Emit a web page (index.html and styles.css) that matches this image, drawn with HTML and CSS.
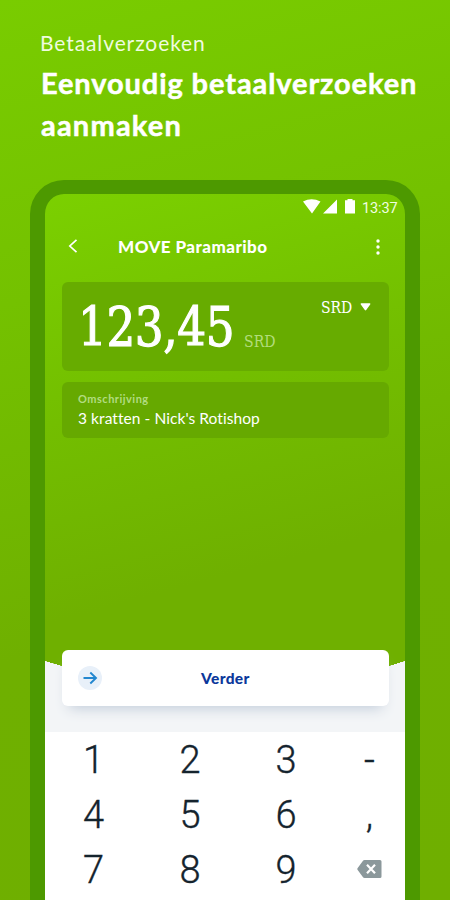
FILE: index.html
```html
<!DOCTYPE html>
<html lang="nl">
<head>
<meta charset="utf-8">
<title>Betaalverzoeken</title>
<link rel="stylesheet" href="styles.css">
</head>
<body>
<main class="promo">
  <header class="intro">
    <p class="eyebrow">Betaalverzoeken</p>
    <h1 class="headline">Eenvoudig betaalverzoeken<br><span class="line-two">aanmaken</span></h1>
  </header>
  <section class="phone">
    <div class="status">
      <svg width="54" height="15" viewBox="0 0 54 15" fill="#fff"><path d="M0 2.500Q8.500-2 17.500 2.500L9 14.500ZM34 .5V14.500H20ZM42 1.200h2.500V0h5v1.200H52V14.500H42Z"/></svg>
      <span class="time">13:37</span>
    </div>
    <nav class="appbar">
      <svg class="back" width="10" height="14" viewBox="0 0 10 14" fill="none" stroke="#fff" stroke-width="1.700"><path d="M8.500.8 1.800 7l6.700 6.200"/></svg>
      <h2 class="title">MOVE Paramaribo</h2>
      <svg class="more" width="4" height="16" viewBox="0 0 4 16" fill="#fff"><circle cx="2" cy="2" r="1.700"/><circle cx="2" cy="8" r="1.700"/><circle cx="2" cy="14" r="1.700"/></svg>
    </nav>
    <div class="amount">
      <span class="value">123,45</span>
      <span class="unit">SRD</span>
      <span class="currency"><span class="code">SRD</span><svg width="11" height="8" viewBox="0 0 11 8" fill="#fff"><path d="M1.200.3h8.600q1.100.2.4 1.100L6.200 7q-.7.8-1.400 0L.8 1.400Q.1.500 1.200.3Z"/></svg></span>
    </div>
    <div class="description">
      <span class="label">Omschrijving</span>
      <span class="text">3 kratten - Nick's Rotishop</span>
    </div>
    <div class="action">
      <div class="button">
        <svg class="go" width="24" height="24" viewBox="0 0 24 24" fill="none"><circle cx="12" cy="12" r="12" fill="#e8f0f9"/><path d="M5.500 12h12M12.300 6.500 18 12l-5.700 5.500" stroke="#2387cf" stroke-width="1.900"/></svg>
        <span class="verder">Verder</span>
      </div>
    </div>
    <div class="keypad">
      <span>1</span><span>2</span><span>3</span><span class="sign">-</span>
      <span>4</span><span>5</span><span>6</span><span class="sign">,</span>
      <span>7</span><span>8</span><span>9</span><span class="sign"><svg width="25" height="18" viewBox="0 0 25 18"><path d="M7.500 0H23q1.500 0 1.500 1.500v15Q24.500 18 23 18H7.500Q6.500 18 6 17.200L.5 9.800q-.5-.8 0-1.600L6 .8Q6.500 0 7.500 0Z" fill="#8b989b"/><path d="m10 4.800 8 8.400m0-8.400-8 8.400" stroke="#fff" stroke-width="2.200"/></svg></span>
    </div>
  </section>
</main>
</body>
</html>
```
FILE: styles.css
```css
* { box-sizing: border-box; }
body { margin: 0; font-family: Lato, sans-serif; color: #fff; font-variant-ligatures: none; }
svg { display: block; flex: none; }
.promo {
  height: 900px;
  overflow: hidden;
  background: linear-gradient(165deg, #79cc00 0%, #74c100 30%, #6fb000 65%, #6faf00 100%);
}
.intro { height: 180px; padding: 31px 0 0 40px; }
.eyebrow { margin: 0; font-size: 21px; line-height: 24px; letter-spacing: .9px; color: #effbdf; }
.headline { margin: 7px 0 0 1px; font-size: 29px; line-height: 42px; font-weight: 700; white-space: nowrap; letter-spacing: .9px; -webkit-text-stroke: .5px #fff; }
.line-two { letter-spacing: 1.200px; }
.phone {
  width: 390px;
  height: 760px;
  margin-left: 30px;
  border: 15px solid #4d9900;
  border-top-width: 14px;
  border-radius: 34px 34px 0 0;
  background: linear-gradient(165deg, #7bd000 0%, #73be00 28%, #6fb000 52%, #6fb000 100%);
}
.status { height: 27px; padding: 5px 8px 0 258px; display: flex; gap: 5px; }
.time { margin-top: 1px; font: 14.500px/18px Roboto, sans-serif; letter-spacing: -.1px; color: #f1ffe2; }
.appbar { height: 61px; padding: 13px 25px 0 23px; display: flex; align-items: flex-start; }
.back { margin-top: 5px; }
.title { margin: 1px auto 0 40px; font-size: 17px; line-height: 24px; font-weight: 900; letter-spacing: .45px; }
.more { margin-top: 5px; }
.amount {
  height: 89px; margin: 0 16px 0 17px; padding: 10px 16px;
  display: flex; border-radius: 6px; background: #67ac00;
}
.value, .unit, .code { font-family: "DejaVu Serif Condensed", "DejaVu Serif", serif; transform-origin: left; }
.value {
  width: 156px; flex: none; white-space: nowrap; margin-top: 1px;
  font-size: 54px; line-height: 70px; letter-spacing: -.5px;
  transform: scaleX(.935); -webkit-text-stroke: 1.100px #fff;
}
.unit { margin: 37px 0 0 10px; font-size: 17px; line-height: 24px; transform: scaleX(.92); color: #b2dc7c; }
.currency { margin-left: auto; display: flex; gap: 7px; padding: 10px 2px 0 0; }
.currency svg { margin-top: 1px; }
.code { margin-top: -6px; width: 32px; font-size: 16.500px; line-height: 24px; transform: scaleX(.94); }
.description {
  height: 56px; margin: 11px 16px 0 17px; padding: 9px 16px;
  display: flex; flex-direction: column; border-radius: 6px; background: #66a900;
}
.label { font-size: 11px; line-height: 15px; font-weight: 700; letter-spacing: .5px; color: #b2dc80; }
.text { margin-top: 2px; font-size: 15.500px; line-height: 21px; letter-spacing: .07px; }
.action {
  height: 82px; margin-top: 212px; padding: 0 16px 0 17px;
  background: linear-gradient(#f3f5f7, #f3f5f7) 0 16px / 100% 66px no-repeat,
    linear-gradient(to top right, #f3f5f7 49%, transparent 51%) 0 11px / 17px 5px no-repeat,
    linear-gradient(to top left, #f3f5f7 49%, transparent 51%) 100% 11px / 16px 5px no-repeat;
}
.button {
  height: 56px; display: flex; align-items: center; padding-left: 16px;
  border-radius: 6px; background: #fff; box-shadow: 0 9px 14px -7px #bfcad8;
}
.verder { margin-left: 99px; font-size: 15.500px; font-weight: 900; letter-spacing: .35px; color: #0b389b; }
.keypad {
  height: 200px; padding-top: 1px; background: #fff; color: #14232d;
  display: grid; grid-template-columns: 97px 96px 96px 71px; grid-auto-rows: 55px;
  font: 300 38px/55px Roboto, sans-serif;
  -webkit-text-stroke: .35px #14232d;
}
.keypad span { text-align: center; }
.keypad .sign { display: flex; justify-content: center; align-items: center; }
.keypad .sign svg { margin-top: -4px; }
```
